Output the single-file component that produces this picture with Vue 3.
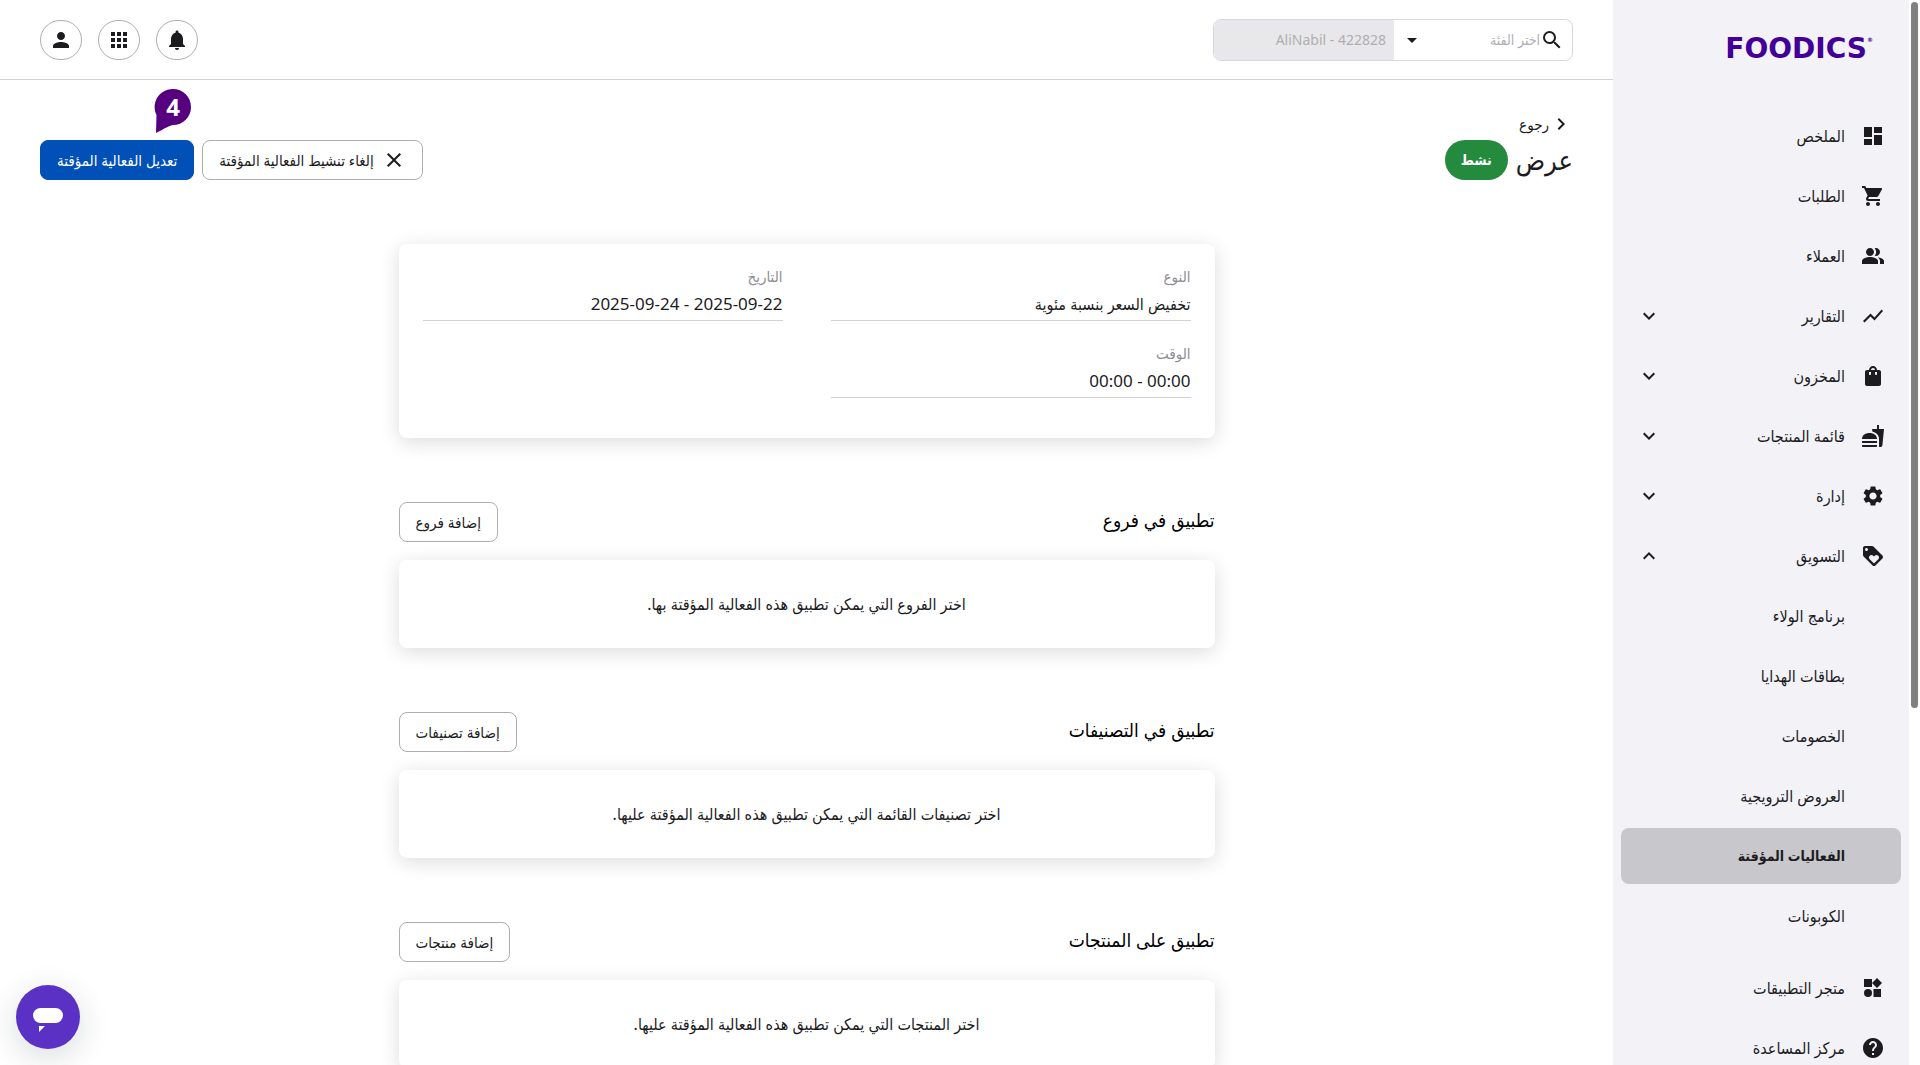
<template>
    <div class="app" dir="rtl" lang="ar">
        <aside class="sidebar">
            <a class="logo" href="#">FOODICS<sup class="logo__mark">®</sup></a>

            <nav class="nav">
                <component
                    :is="item.chevron ? 'button' : 'a'"
                    v-for="item in menu"
                    :key="item.label"
                    class="nav__item"
                    :class="{ 'nav__item--active': item.active, 'nav__item--spaced': item.spaced }"
                    :href="item.chevron ? null : '#'"
                    :type="item.chevron ? 'button' : null"
                    :aria-expanded="item.chevron ? item.chevron === 'up' : null"
                    :aria-current="item.active ? 'page' : null"
                >
                    <svg class="icon" viewBox="0 0 24 24" aria-hidden="true">
                        <path v-if="item.icon" :d="icons[item.icon]" />
                    </svg>
                    <span class="nav__label">{{ item.label }}</span>
                    <svg v-if="item.chevron" class="icon" viewBox="0 0 24 24" aria-hidden="true">
                        <path :d="item.chevron === 'up' ? icons.chevronUp : icons.chevronDown" />
                    </svg>
                </component>
            </nav>
        </aside>

        <main class="main">
            <header class="topbar">
                <div class="search">
                    <svg class="icon" viewBox="0 0 24 24" aria-hidden="true">
                        <path :d="icons.search" />
                    </svg>
                    <select class="search__select" aria-label="اختر الفئة">
                        <option>اختر الفئة</option>
                    </select>
                    <svg class="icon" viewBox="0 0 24 24" aria-hidden="true">
                        <path d="M7 10l5 5 5-5z" />
                    </svg>
                    <input class="search__input" type="text" value="AliNabil - 422828" aria-label="بحث" disabled>
                </div>
                <div class="topbar__actions">
                    <button
                        v-for="action in topActions"
                        :key="action.icon"
                        class="round"
                        type="button"
                        :aria-label="action.label"
                    >
                        <svg class="icon" viewBox="0 0 24 24" aria-hidden="true">
                            <path :d="icons[action.icon]" />
                        </svg>
                    </button>
                </div>
            </header>

            <div class="heading">
                <div>
                    <a class="back" href="#">
                        <svg class="icon" viewBox="0 0 24 24" aria-hidden="true">
                            <path :d="icons.chevronRight" />
                        </svg>
                        رجوع
                    </a>
                    <div class="heading__row">
                        <h1 class="title">عرض</h1>
                        <span class="status">نشط</span>
                    </div>
                </div>
                <div class="heading__actions">
                    <button class="btn" type="button">
                        <svg class="icon" viewBox="0 0 24 24" aria-hidden="true">
                            <path :d="icons.close" />
                        </svg>
                        إلغاء تنشيط الفعالية المؤقتة
                    </button>
                    <button class="btn btn--primary" type="button">تعديل الفعالية المؤقتة</button>
                    <span class="step">
                        <svg class="step__shape" viewBox="0 0 38 46" aria-hidden="true">
                            <path d="M19 1a18 18 0 1 1 0 36C14 38 8 42 2 45L2.500 27A18 18 0 0 1 19 1z" />
                        </svg>
                        <span class="step__number">4</span>
                    </span>
                </div>
            </div>

            <div class="content">
                <dl class="card details">
                    <div v-for="field in fields" :key="field.label" class="field">
                        <dt class="field__label">{{ field.label }}</dt>
                        <dd class="field__value" :class="{ 'field__value--numeric': field.numeric }">
                            {{ field.value }}
                        </dd>
                    </div>
                </dl>

                <section v-for="section in sections" :key="section.title" class="section">
                    <div class="section__head">
                        <h2 class="section__title">{{ section.title }}</h2>
                        <button class="btn" type="button">{{ section.action }}</button>
                    </div>
                    <p class="card section__empty">{{ section.empty }}</p>
                </section>
            </div>
        </main>

        <div class="scrollbar" aria-hidden="true">
            <div class="scrollbar__thumb"></div>
        </div>

        <button class="chat" type="button" aria-label="محادثة">
            <svg viewBox="0 0 64 64" aria-hidden="true">
                <rect x="17" y="23" width="30" height="15" rx="7.500" />
                <path d="M23 41h6l-6 6z" />
            </svg>
        </button>
    </div>
</template>

<script setup>
const icons = {
    dashboard: 'M3 13h8V3H3v10zm0 8h8v-6H3v6zm10 0h8V11h-8v10zm0-18v6h8V3h-8z',
    cart: 'M7 18c-1.100 0-1.990.9-1.990 2S5.900 22 7 22s2-.9 2-2-.9-2-2-2zM1 2v2h2l3.600 7.590-1.350 2.450c-.16.28-.25.610-.25.960 0 1.100.9 2 2 2h12v-2H7.420c-.14 0-.25-.11-.25-.25l.03-.12.9-1.630h7.450c.75 0 1.410-.41 1.750-1.030l3.580-6.490A1 1 0 0 0 20 4H5.210l-.94-2H1zm16 16c-1.100 0-1.990.9-1.990 2s.89 2 1.990 2 2-.9 2-2-.9-2-2-2z',
    people: 'M16.670 13.130C18.040 14.060 19 15.320 19 17v3h4v-3c0-2.180-3.570-3.470-6.330-3.870zM15 12c2.210 0 4-1.790 4-4s-1.790-4-4-4c-.47 0-.91.1-1.330.240a5.980 5.980 0 0 1 0 7.520c.42.140.860.240 1.330.240zM9 12c2.210 0 4-1.790 4-4s-1.790-4-4-4-4 1.790-4 4 1.790 4 4 4zm0 1c-2.670 0-8 1.340-8 4v3h16v-3c0-2.660-5.330-4-8-4z',
    chart: 'M3.500 18.490l6-6.010 4 4L22 6.920l-1.410-1.410-7.090 7.970-4-4L2 16.990z',
    bag: 'M18 6h-2c0-2.210-1.790-4-4-4S8 3.790 8 6H6c-1.100 0-2 .9-2 2v12c0 1.100.9 2 2 2h12c1.100 0 2-.9 2-2V8c0-1.100-.9-2-2-2zm-8 4c0 .55-.45 1-1 1s-1-.45-1-1V8h2v2zm2-6c1.100 0 2 .9 2 2h-4c0-1.100.9-2 2-2zm4 6c0 .55-.45 1-1 1s-1-.45-1-1V8h2v2z',
    food: 'M18.060 22.990h1.660c.84 0 1.530-.64 1.630-1.460L23 5.050h-5V1h-1.970v4.050h-4.970l.3 2.340c1.710.47 3.310 1.320 4.270 2.260 1.440 1.420 2.430 2.890 2.430 5.290v8.050zM1 21.990V21h15.030v.99c0 .55-.45 1-1.010 1H2.010c-.56 0-1.010-.45-1.010-1zm15.030-7c0-8-15.030-8-15.030 0h15.030zM1.020 17h15v2h-15z',
    settings: 'M19.140 12.940c.04-.3.060-.61.060-.94 0-.32-.02-.64-.07-.94l2.030-1.580c.18-.14.23-.41.12-.61l-1.920-3.320c-.12-.22-.37-.29-.59-.22l-2.390.96c-.5-.38-1.030-.7-1.620-.94l-.36-2.540c-.04-.24-.24-.41-.48-.41h-3.840c-.24 0-.43.17-.47.41l-.36 2.540c-.59.24-1.130.57-1.620.94l-2.390-.96c-.22-.08-.47 0-.59.22L2.740 8.870c-.12.21-.08.47.12.61l2.030 1.580c-.05.3-.09.63-.09.94s.02.64.07.94l-2.030 1.580c-.18.14-.23.41-.12.610l1.920 3.320c.12.22.37.29.59.22l2.390-.96c.5.38 1.030.7 1.620.94l.36 2.540c.05.24.24.41.48.41h3.840c.24 0 .44-.17.470-.41l.36-2.540c.59-.24 1.130-.56 1.620-.94l2.390.96c.22.080.47 0 .59-.22l1.920-3.320c.12-.22.070-.47-.12-.61l-2.010-1.580zM12 15.600c-1.980 0-3.600-1.620-3.600-3.600s1.620-3.600 3.600-3.600 3.600 1.620 3.600 3.600-1.620 3.600-3.600 3.600z',
    loyalty: 'M21.410 11.580l-9-9C12.050 2.220 11.550 2 11 2H4c-1.100 0-2 .9-2 2v7c0 .55.22 1.050.59 1.420l9 9c.36.36.86.58 1.410.58.55 0 1.050-.22 1.410-.59l7-7c.37-.36.59-.86.59-1.410 0-.55-.23-1.060-.59-1.420zM5.500 7C4.670 7 4 6.330 4 5.500S4.670 4 5.500 4 7 4.670 7 5.500 6.330 7 5.500 7zm11.770 8.270L13 19.540l-4.270-4.270C8.280 14.810 8 14.190 8 13.500c0-1.380 1.120-2.500 2.500-2.500.69 0 1.320.28 1.770.74l.73.720.73-.73c.45-.45 1.080-.73 1.770-.73 1.380 0 2.500 1.120 2.500 2.500 0 .69-.28 1.320-.73 1.770z',
    apps: 'M3 3h8v8H3zM16 2l5 5-5 5-5-5zM12.500 13h7.500v8h-7.500zM7 13a4 4 0 1 0 0 8 4 4 0 0 0 0-8z',
    help: 'M12 2C6.480 2 2 6.480 2 12s4.480 10 10 10 10-4.480 10-10S17.520 2 12 2zm1 17h-2v-2h2v2zm2.070-7.750l-.9.920C13.450 12.900 13 13.500 13 15h-2v-.5c0-1.100.45-2.100 1.170-2.830l1.240-1.260c.37-.36.59-.86.59-1.410 0-1.100-.9-2-2-2s-2 .9-2 2H8c0-2.210 1.790-4 4-4s4 1.790 4 4c0 .88-.36 1.680-.93 2.250z',
    search: 'M15.500 14h-.79l-.28-.27A6.470 6.470 0 0 0 16 9.500 6.500 6.500 0 1 0 9.500 16c1.610 0 3.090-.59 4.230-1.570l.27.28v.79l5 4.990L20.490 19l-4.990-5zm-6 0C7.010 14 5 11.990 5 9.500S7.010 5 9.500 5 14 7.010 14 9.500 11.990 14 9.500 14z',
    bell: 'M12 22c1.100 0 2-.9 2-2h-4c0 1.100.89 2 2 2zm6-6v-5c0-3.070-1.640-5.640-4.500-6.320V4c0-.83-.67-1.500-1.500-1.500s-1.500.67-1.500 1.500v.68C7.630 5.360 6 7.920 6 11v5l-2 2v1h16v-1l-2-2z',
    grid: 'M4 8h4V4H4v4zm6 12h4v-4h-4v4zm-6 0h4v-4H4v4zm0-6h4v-4H4v4zm6 0h4v-4h-4v4zm6-10v4h4V4h-4zm-6 4h4V4h-4v4zm6 6h4v-4h-4v4zm0 6h4v-4h-4v4z',
    user: 'M12 12c2.210 0 4-1.790 4-4s-1.790-4-4-4-4 1.790-4 4 1.790 4 4 4zm0 2c-2.670 0-8 1.340-8 4v2h16v-2c0-2.660-5.330-4-8-4z',
    close: 'M19 6.410L17.590 5 12 10.590 6.410 5 5 6.410 10.590 12 5 17.590 6.410 19 12 13.410 17.590 19 19 17.590 13.410 12z',
    chevronDown: 'M7.410 8.590L12 13.170l4.590-4.580L18 10l-6 6-6-6z',
    chevronUp: 'M7.410 15.410L12 10.830l4.590 4.580L18 14l-6-6-6 6z',
    chevronRight: 'M8.590 16.590L13.170 12 8.590 7.410 10 6l6 6-6 6z',
};

const menu = [
    { label: 'الملخص', icon: 'dashboard' },
    { label: 'الطلبات', icon: 'cart' },
    { label: 'العملاء', icon: 'people' },
    { label: 'التقارير', icon: 'chart', chevron: 'down' },
    { label: 'المخزون', icon: 'bag', chevron: 'down' },
    { label: 'قائمة المنتجات', icon: 'food', chevron: 'down' },
    { label: 'إدارة', icon: 'settings', chevron: 'down' },
    { label: 'التسويق', icon: 'loyalty', chevron: 'up' },
    { label: 'برنامج الولاء' },
    { label: 'بطاقات الهدايا' },
    { label: 'الخصومات' },
    { label: 'العروض الترويجية' },
    { label: 'الفعاليات المؤقتة', active: true },
    { label: 'الكوبونات' },
    { label: 'متجر التطبيقات', icon: 'apps', spaced: true },
    { label: 'مركز المساعدة', icon: 'help' },
];

const topActions = [
    { icon: 'bell', label: 'الإشعارات' },
    { icon: 'grid', label: 'التطبيقات' },
    { icon: 'user', label: 'الحساب' },
];

const fields = [
    { label: 'النوع', value: 'تخفيض السعر بنسبة مئوية' },
    { label: 'التاريخ', value: '2025-09-22 - 2025-09-24', numeric: true },
    { label: 'الوقت', value: '00:00 - 00:00', numeric: true },
];

const sections = [
    {
        title: 'تطبيق في فروع',
        action: 'إضافة فروع',
        empty: 'اختر الفروع التي يمكن تطبيق هذه الفعالية المؤقتة بها.',
    },
    {
        title: 'تطبيق في التصنيفات',
        action: 'إضافة تصنيفات',
        empty: 'اختر تصنيفات القائمة التي يمكن تطبيق هذه الفعالية المؤقتة عليها.',
    },
    {
        title: 'تطبيق على المنتجات',
        action: 'إضافة منتجات',
        empty: 'اختر المنتجات التي يمكن تطبيق هذه الفعالية المؤقتة عليها.',
    },
];
</script>

<style>
body {
    margin: 0;
    background: #fff;
}
</style>

<style scoped>
.app {
    display: flex;
    height: 100vh;
    overflow: hidden;
    color: #1c1c1e;
    font-family: "Noto Sans", "DejaVu Sans Condensed", "DejaVu Sans", sans-serif;
    font-size: 16px;
    line-height: 24px;
}

.app *,
.app {
    box-sizing: border-box;
}

button,
select,
input {
    font: inherit;
    color: inherit;
}

button {
    cursor: pointer;
}

a {
    color: inherit;
    text-decoration: none;
}

.icon {
    flex: none;
    width: 24px;
    height: 24px;
    fill: #1c1c1e;
}

/* sidebar */
.scrollbar {
    order: -1;
    flex: none;
    width: 11px;
    padding: 2px;
    background: #fff;
}

.scrollbar__thumb {
    height: 66.5%;
    border-radius: 4px;
    background: #808080;
}

.sidebar {
    flex: none;
    width: 296px;
    padding: 0 8px;
    background: #f2f2f7;
}

.logo {
    display: flex;
    align-items: center;
    height: 106px;
    padding: 0 28px 8px;
    color: #430098;
    font-family: "DejaVu Sans", sans-serif;
    font-size: 28px;
    font-weight: 700;
}

.logo__mark {
    order: -1;
    align-self: flex-start;
    margin-top: 32px;
    font-size: 6px;
    line-height: 16px;
}

.nav {
    display: flex;
    flex-direction: column;
}

.nav__item {
    display: flex;
    align-items: center;
    gap: 16px;
    height: 56px;
    margin: 2px 0;
    padding: 0 16px;
    border: 0;
    border-radius: 8px;
    background: none;
    font-size: 16px;
    text-align: start;
}

.nav__item--active {
    background: #c7c7cc;
    font-size: 14px;
    font-weight: 700;
}

.nav__item--spaced {
    margin-top: 14px;
}

.nav__label {
    flex: 1;
}

/* top bar */
.main {
    flex: 1;
    min-width: 0;
}

.topbar {
    display: flex;
    align-items: center;
    justify-content: space-between;
    height: 80px;
    padding: 0 40px;
    border-bottom: 1px solid #d1d1d6;
}

.topbar__actions {
    display: flex;
    gap: 16px;
}

.search {
    display: flex;
    align-items: center;
    width: 360px;
    height: 42px;
    padding-right: 8px;
    overflow: hidden;
    border: 1px solid #d6d6e7;
    border-radius: 8px;
}

.search__select {
    flex: 1;
    min-width: 0;
    border: 0;
    background: none;
    appearance: none;
    color: #aeaeb2;
    font-size: 14px;
}

.search__input {
    width: 180px;
    height: 100%;
    margin-right: 6px;
    padding: 0 8px;
    border: 0;
    background: #e8e8ea;
    color: #aeaeb2;
    font-size: 14px;
}

.round {
    display: flex;
    align-items: center;
    justify-content: center;
    width: 42px;
    height: 40px;
    padding: 0;
    border: 1px solid #aeaeb2;
    border-radius: 20px;
    background: #fff;
}

/* page heading */
.heading {
    display: flex;
    align-items: flex-end;
    justify-content: space-between;
    padding: 28px 40px 64px;
}

.heading__row {
    display: flex;
    align-items: center;
    gap: 8px;
    height: 40px;
}

.back {
    display: flex;
    align-items: center;
    height: 32px;
    font-size: 15px;
}

.title {
    margin: 0;
    font-size: 27px;
    font-weight: 400;
    line-height: 40px;
}

.status {
    display: flex;
    align-items: center;
    height: 40px;
    padding: 0 16px;
    border-radius: 20px;
    background: #248a3d;
    color: #fff;
    font-size: 14px;
    font-weight: 700;
}

.heading__actions {
    position: relative;
    display: flex;
    gap: 8px;
}

.btn {
    display: flex;
    align-items: center;
    gap: 8px;
    height: 40px;
    padding: 0 16px;
    border: 1px solid #aeaeb2;
    border-radius: 8px;
    background: #fff;
    font-size: 15px;
    white-space: nowrap;
}

.btn--primary {
    border-color: #0050b8;
    background: #0050b8;
    color: #fff;
}

/* numbered marker over the edit button */
.step {
    position: absolute;
    bottom: 46px;
    left: 114px;
    width: 38px;
    height: 46px;
    color: #fff;
}

.step__shape {
    width: 100%;
    height: 100%;
    fill: #57007f;
}

.step__number {
    position: absolute;
    top: 0;
    right: 0;
    width: 100%;
    font-size: 24px;
    font-weight: 700;
    line-height: 38px;
    text-align: center;
}

/* content */
.content {
    max-width: 816px;
    margin: 0 auto;
}

.card {
    margin: 0;
    border-radius: 8px;
    background: #fff;
    box-shadow: 0 4px 20px rgba(0, 0, 0, 0.14);
}

.details {
    display: grid;
    grid-template-columns: 1fr 1fr;
    gap: 20px 48px;
    padding: 20px 24px 40px;
}

.field {
    border-bottom: 1px solid #d1d1d6;
}

.field__label {
    color: #8e8e93;
    font-size: 15px;
}

.field__value {
    margin: 0;
    padding: 4px 0;
    font-size: 16px;
}

.field__value--numeric {
    font-size: 17px;
}

.section {
    margin-top: 64px;
}

.section__head {
    display: flex;
    align-items: flex-start;
    justify-content: space-between;
    margin-bottom: 18px;
}

.section__title {
    margin: 0;
    color: #000;
    font-size: 19px;
    font-weight: 400;
    line-height: 36px;
}

.section__empty {
    padding: 32px 24px;
    font-size: 16px;
    text-align: center;
}

.chat {
    position: fixed;
    bottom: 16px;
    left: 16px;
    width: 64px;
    height: 64px;
    padding: 0;
    border: 0;
    border-radius: 50%;
    background: #5a31c4;
    box-shadow: 0 8px 32px rgba(9, 32, 44, 0.16);
}

.chat svg {
    display: block;
    fill: #fff;
}
</style>
